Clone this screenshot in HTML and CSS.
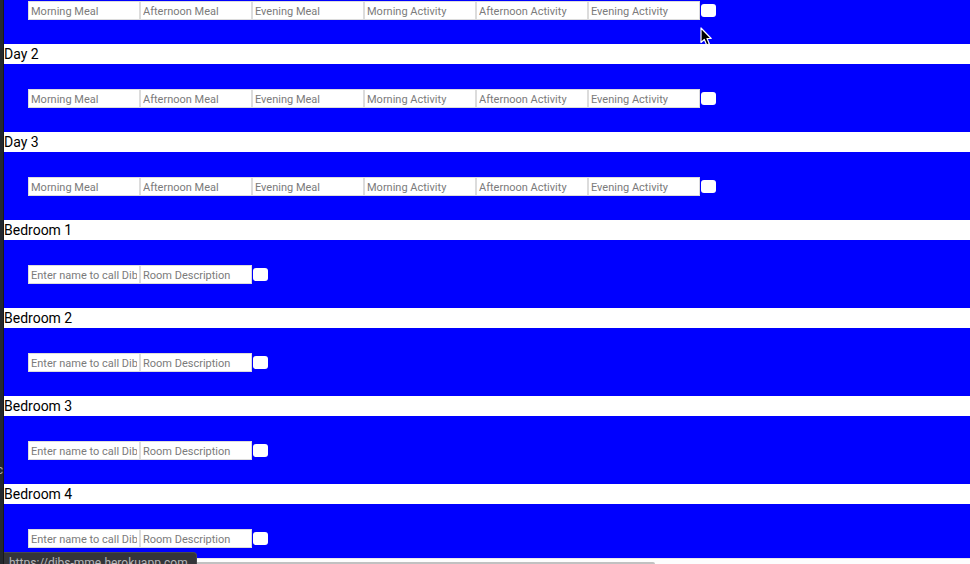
FILE: index.html
```html
<!DOCTYPE html>
<html lang="en">
<head>
<meta charset="utf-8">
<title>Dibs</title>
<link rel="stylesheet" href="styles.css">
</head>
<body>
<div class="window">
  <aside class="edge"><span class="edge-text">c</span></aside>
  <main class="page">
    <form class="band band-first">
      <input class="field" type="text" aria-label="Morning Meal" placeholder="Morning Meal"><input class="field" type="text" aria-label="Afternoon Meal" placeholder="Afternoon Meal"><input class="field" type="text" aria-label="Evening Meal" placeholder="Evening Meal"><input class="field" type="text" aria-label="Morning Activity" placeholder="Morning Activity"><input class="field" type="text" aria-label="Afternoon Activity" placeholder="Afternoon Activity"><input class="field" type="text" aria-label="Evening Activity" placeholder="Evening Activity">
      <button class="submit" type="button" aria-label="Save"></button>
    </form>
    <h2 class="title">Day 2</h2>
    <form class="band">
      <input class="field" type="text" aria-label="Morning Meal" placeholder="Morning Meal"><input class="field" type="text" aria-label="Afternoon Meal" placeholder="Afternoon Meal"><input class="field" type="text" aria-label="Evening Meal" placeholder="Evening Meal"><input class="field" type="text" aria-label="Morning Activity" placeholder="Morning Activity"><input class="field" type="text" aria-label="Afternoon Activity" placeholder="Afternoon Activity"><input class="field" type="text" aria-label="Evening Activity" placeholder="Evening Activity">
      <button class="submit" type="button" aria-label="Save"></button>
    </form>
    <h2 class="title">Day 3</h2>
    <form class="band">
      <input class="field" type="text" aria-label="Morning Meal" placeholder="Morning Meal"><input class="field" type="text" aria-label="Afternoon Meal" placeholder="Afternoon Meal"><input class="field" type="text" aria-label="Evening Meal" placeholder="Evening Meal"><input class="field" type="text" aria-label="Morning Activity" placeholder="Morning Activity"><input class="field" type="text" aria-label="Afternoon Activity" placeholder="Afternoon Activity"><input class="field" type="text" aria-label="Evening Activity" placeholder="Evening Activity">
      <button class="submit" type="button" aria-label="Save"></button>
    </form>
    <h2 class="title">Bedroom 1</h2>
    <form class="band">
      <input class="field" type="text" aria-label="Name" placeholder="Enter name to call Dibs"><input class="field" type="text" aria-label="Room Description" placeholder="Room Description">
      <button class="submit" type="button" aria-label="Save"></button>
    </form>
    <h2 class="title">Bedroom 2</h2>
    <form class="band">
      <input class="field" type="text" aria-label="Name" placeholder="Enter name to call Dibs"><input class="field" type="text" aria-label="Room Description" placeholder="Room Description">
      <button class="submit" type="button" aria-label="Save"></button>
    </form>
    <h2 class="title">Bedroom 3</h2>
    <form class="band">
      <input class="field" type="text" aria-label="Name" placeholder="Enter name to call Dibs"><input class="field" type="text" aria-label="Room Description" placeholder="Room Description">
      <button class="submit" type="button" aria-label="Save"></button>
    </form>
    <h2 class="title">Bedroom 4</h2>
    <form class="band band-last">
      <input class="field" type="text" aria-label="Name" placeholder="Enter name to call Dibs"><input class="field" type="text" aria-label="Room Description" placeholder="Room Description">
      <button class="submit" type="button" aria-label="Save"></button>
    </form>
    <div class="scroll-track"><div class="scroll-thumb"></div></div>
  </main>
  <div class="status">https://dibs-mme.herokuapp.com</div>
  <svg class="cursor" width="14" height="20" viewBox="0 0 14 20" aria-hidden="true">
    <path d="M1 1V15.500L4.300 12.500L6.700 18L9.300 16.800L7 11.500H11.200Z" fill="#000" stroke="#fff" stroke-width="1.200" stroke-linejoin="round"/>
  </svg>
</div>
</body>
</html>
```
FILE: styles.css
```css
* {
  box-sizing: border-box;
}

body {
  margin: 0;
  font-family: Roboto, "Liberation Sans", sans-serif;
  background: #fff;
  color: #000;
}

.window {
  position: relative;
  display: flex;
  height: 100vh;
  overflow: hidden;
}

.edge {
  position: relative;
  flex: 0 0 4px;
  overflow: hidden;
  background: #24292e;
  border-right: 1px solid #17191c;
}

.edge-text {
  position: absolute;
  right: 0;
  top: 462px;
  font-size: 12px;
  line-height: 16px;
  color: #aaa;
}

.page {
  flex: 1;
  min-width: 0;
  display: flex;
  flex-direction: column;
}

.title {
  flex: none;
  margin: 0;
  font-size: 14px;
  font-weight: 400;
  line-height: 20px;
}

.band {
  flex: none;
  display: flex;
  align-items: center;
  padding: 25px 24px 24px;
  background: #00f;
}

/* The first row is scrolled partly out of view. */
.band-first {
  padding-top: 1px;
}

.band-last {
  flex: 1;
  align-items: flex-start;
  padding-bottom: 0;
}

.band-last .submit {
  margin-top: 3px;
}

.field {
  width: 112px;
  height: 19px;
  margin: 0;
  padding: 2px 2px 0;
  border: 1px solid #dcdcdc;
  border-radius: 0;
  background: #fff;
  font: 11px Roboto, "Liberation Sans", sans-serif;
}

.field::placeholder {
  color: #7b7b7b;
  opacity: 1;
}

.submit {
  width: 15px;
  height: 13px;
  margin: 0 0 0 1px;
  padding: 0;
  border: 0;
  border-radius: 3px;
  background: #fff;
}

.scroll-track {
  flex: none;
  height: 6px;
  padding-top: 3px;
  border-top: 1px solid #e8e8e8;
  background: #fdfdfd;
}

.scroll-thumb {
  width: 67.4%;
  height: 2px;
  border-top-right-radius: 2px;
  background: #c1c1c1;
}

.status {
  position: absolute;
  left: 4px;
  bottom: 0;
  height: 12px;
  padding: 0 8px 0 5px;
  overflow: hidden;
  border: 1px solid #48494c;
  border-left: 0;
  border-bottom: 0;
  border-top-right-radius: 4px;
  background: #343539;
  color: #b5b6b8;
  font-size: 12px;
  line-height: 20px;
}

.cursor {
  position: absolute;
  left: 700px;
  top: 27px;
}
```
